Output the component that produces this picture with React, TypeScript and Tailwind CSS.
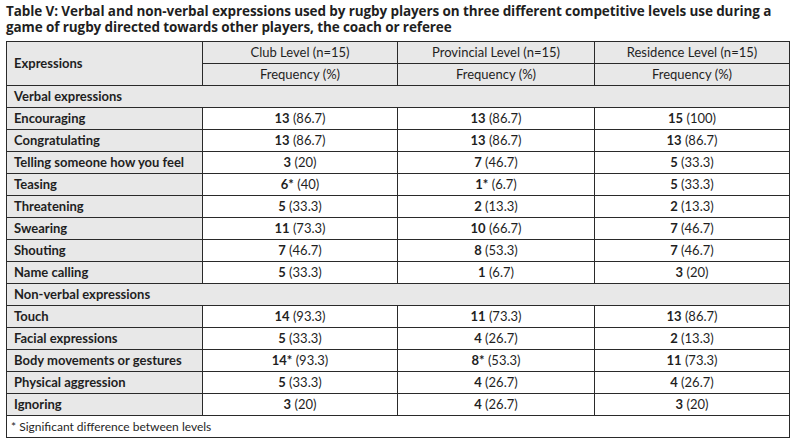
const verbal: [string, string[]][] = [
  ["Encouraging", ["13|(86.7)", "13|(86.7)", "15|(100)"]],
  ["Congratulating", ["13|(86.7)", "13|(86.7)", "13|(86.7)"]],
  ["Telling someone how you feel", ["3|(20)", "7|(46.7)", "5|(33.3)"]],
  ["Teasing", ["6*|(40)", "1*|(6.7)", "5|(33.3)"]],
  ["Threatening", ["5|(33.3)", "2|(13.3)", "2|(13.3)"]],
  ["Swearing", ["11|(73.3)", "10|(66.7)", "7|(46.7)"]],
  ["Shouting", ["7|(46.7)", "8|(53.3)", "7|(46.7)"]],
  ["Name calling", ["5|(33.3)", "1|(6.7)", "3|(20)"]],
];

const nonVerbal: [string, string[]][] = [
  ["Touch", ["14|(93.3)", "11|(73.3)", "13|(86.7)"]],
  ["Facial expressions", ["5|(33.3)", "4|(26.7)", "2|(13.3)"]],
  ["Body movements or gestures", ["14*|(93.3)", "8*|(53.3)", "11|(73.3)"]],
  ["Physical aggression", ["5|(33.3)", "4|(26.7)", "4|(26.7)"]],
  ["Ignoring", ["3|(20)", "4|(26.7)", "3|(20)"]],
];

const cell = "border border-[#2a2a2a] h-[22px] p-0";

function Value({ v }: { v: string }) {
  const [n, pct] = v.split("|");
  return (
    <span>
      <span className="font-bold">{n}</span> {pct}
    </span>
  );
}

function Rows({ rows }: { rows: [string, string[]][] }) {
  return (
    <>
      {rows.map(([label, vals]) => (
        <tr key={label}>
          <td className={`${cell} bg-[#e8e8e8] pl-[7px] font-bold`}>{label}</td>
          {vals.map((v, i) => (
            <td key={i} className={`${cell} bg-white text-center`}>
              <Value v={v} />
            </td>
          ))}
        </tr>
      ))}
    </>
  );
}

function Section({ title }: { title: string }) {
  return (
    <tr>
      <td colSpan={4} className={`${cell} bg-[#e8e8e8] pl-[7px] font-bold`}>
        {title}
      </td>
    </tr>
  );
}

export default function App() {
  return (
    <div className="w-[800px] h-[448px] bg-white text-[#1f1f1f] font-['Lato',sans-serif]">
      <div className="pl-[6px] pt-[3px] pb-[6px]">
        <h1 className="whitespace-nowrap font-['Open_Sans',sans-serif] text-[13.5px] leading-[16px] font-bold tracking-[-0.1px]">
          Table V: Verbal and non-verbal expressions used by rugby players on three different competitive levels use during a
          <br />
          game of rugby directed towards other players, the coach or referee
        </h1>
      </div>
      <table className="ml-[6px] w-[783px] table-fixed border-collapse text-[13px] leading-none">
        <colgroup>
          <col className="w-[196px]" />
          <col className="w-[195px]" />
          <col className="w-[197px]" />
          <col className="w-[195px]" />
        </colgroup>
        <thead>
          <tr>
            <td rowSpan={2} className={`${cell} bg-[#e8e8e8] pl-[7px] font-bold`}>
              Expressions
            </td>
            <td className={`${cell} bg-[#e8e8e8] text-center`}>Club Level (n=15)</td>
            <td className={`${cell} bg-[#e8e8e8] text-center`}>Provincial Level (n=15)</td>
            <td className={`${cell} bg-[#e8e8e8] text-center`}>Residence Level (n=15)</td>
          </tr>
          <tr>
            <td className={`${cell} bg-[#e8e8e8] text-center`}>Frequency (%)</td>
            <td className={`${cell} bg-[#e8e8e8] text-center`}>Frequency (%)</td>
            <td className={`${cell} bg-[#e8e8e8] text-center`}>Frequency (%)</td>
          </tr>
        </thead>
        <tbody>
          <Section title="Verbal expressions" />
          <Rows rows={verbal} />
          <Section title="Non-verbal expressions" />
          <Rows rows={nonVerbal} />
          <tr>
            <td colSpan={4} className={`${cell} bg-white pl-[4px] text-[12px]`}>
              * Significant difference between levels
            </td>
          </tr>
        </tbody>
      </table>
    </div>
  );
}
